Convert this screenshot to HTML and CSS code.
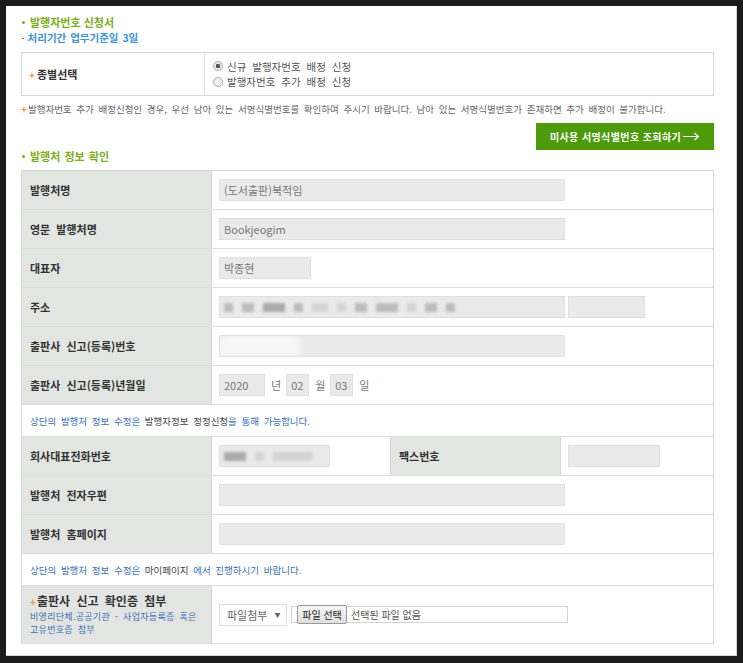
FILE: index.html
```html
<!DOCTYPE html>
<html lang="ko">
<head>
    <meta charset="UTF-8">
    <meta name="viewport" content="width=device-width, initial-scale=1.0">
    <title>발행자번호 신청서</title>
    <link rel="stylesheet" href="styles.css">
</head>
<body>
    <div class="page">
        <h2 class="sec-title">발행자번호 신청서</h2>
        <p class="period">- <strong>처리기간 업무기준일 3일</strong></p>

        <div class="kind-box">
            <div class="kind-label"><span class="plus">+</span>종별선택</div>
            <div class="kind-opts">
                <label><input type="radio" name="kind" checked>신규 발행자번호 배정 신청</label>
                <label><input type="radio" name="kind">발행자번호 추가 배정 신청</label>
            </div>
        </div>

        <p class="notice"><span class="plus">+</span>발행자번호 추가 배정신청인 경우, 우선 남아 있는 서명식별번호를 확인하여 주시기 바랍니다. 남아 있는 서명식별번호가 존재하면 추가 배정이 불가합니다.</p>

        <div class="btn-row">
            <button type="button" class="btn-green">미사용 서명식별번호 조회하기
                <svg width="17" height="9" viewBox="0 0 17 9"><path d="M0 4.5H15.5M11.5 1L15.5 4.5L11.5 8" fill="none" stroke="#fff" stroke-width="1.2"/></svg>
            </button>
        </div>

        <h2 class="sec-title sub">발행처 정보 확인</h2>

        <div class="info">
            <div class="row">
                <div class="th">발행처명</div>
                <div class="td"><span class="field w-lg">(도서출판)북적임</span></div>
            </div>
            <div class="row">
                <div class="th">영문 발행처명</div>
                <div class="td"><span class="field w-lg">Bookjeogim</span></div>
            </div>
            <div class="row">
                <div class="th">대표자</div>
                <div class="td"><span class="field w-sm">박종현</span></div>
            </div>
            <div class="row">
                <div class="th">주소</div>
                <div class="td">
                    <span class="field w-lg blur">
                        <i class="bk a"></i><i class="bk b"></i><i class="bk c dark"></i><i class="bk a"></i><i class="bk d light"></i><i class="bk a light"></i><i class="bk b"></i><i class="bk c"></i><i class="bk a light"></i><i class="bk b"></i><i class="bk a"></i>
                    </span>
                    <span class="field w-addr"></span>
                </div>
            </div>
            <div class="row">
                <div class="th">출판사 신고(등록)번호</div>
                <div class="td"><span class="field w-lg blur"><i class="bk white"></i></span></div>
            </div>
            <div class="row">
                <div class="th">출판사 신고(등록)년월일</div>
                <div class="td date">
                    <span class="field w-year">2020</span><span class="unit">년</span>
                    <span class="field w-day">02</span><span class="unit">월</span>
                    <span class="field w-day">03</span><span class="unit">일</span>
                </div>
            </div>
            <div class="row note-row">
                <p><span class="blue">상단의 발행처 정보 수정은</span> 발행자정보 정정신청<span class="blue">을 통해 가능합니다.</span></p>
            </div>
            <div class="row">
                <div class="th">회사대표전화번호</div>
                <div class="td phone"><span class="field w-tel blur"><i class="bk e dark"></i><i class="bk a light"></i><i class="bk f light"></i></span></div>
                <div class="th fax">팩스번호</div>
                <div class="td"><span class="field w-sm"></span></div>
            </div>
            <div class="row">
                <div class="th">발행처 전자우편</div>
                <div class="td"><span class="field w-lg"></span></div>
            </div>
            <div class="row">
                <div class="th">발행처 홈페이지</div>
                <div class="td"><span class="field w-lg"></span></div>
            </div>
            <div class="row note-row">
                <p><span class="blue">상단의 발행처 정보 수정은</span> 마이페이지 <span class="blue">에서 진행하시기 바랍니다.</span></p>
            </div>
            <div class="row attach-row">
                <div class="th attach">
                    <span class="attach-title"><span class="plus">+</span>출판사 신고 확인증 첨부</span>
                    <span class="attach-desc">비영리단체.공공기관 - 사업자등록증 혹은<br>고유번호증 첨부</span>
                </div>
                <div class="td">
                    <span class="select">파일첨부<span class="caret">▼</span></span>
                    <span class="file-box"><span class="file-btn">파일 선택</span>선택된 파일 없음</span>
                </div>
            </div>
        </div>
    </div>
</body>
</html>
```

FILE: styles.css
```css
body {
    margin: 0;
    background: #1b1b1b;
    font-family: "Noto Sans CJK KR", sans-serif;
}
.page {
    margin: 6px 0 0 6px;
    width: 731px;
    height: 650px;
    background: #fff;
    border-right: 1px solid #d4d4d4;
    border-bottom: 1px solid #d4d4d4;
    padding: 8px 0 0 15px;
    box-sizing: border-box;
}
.sec-title {
    margin: 0;
    display: flex;
    align-items: center;
    font-size: 11px;
    line-height: 16px;
    font-weight: bold;
    color: #7cae22;
}
.sec-title::before {
    content: "";
    width: 3px;
    height: 3px;
    border-radius: 50%;
    background: #7cae22;
    margin: 0 5px 0 1px;
}
.sec-title.sub {
    line-height: 12px;
    word-spacing: 1px;
}
.period {
    margin: 0;
    font-size: 10.5px;
    line-height: 16px;
    color: #555;
}
.period strong {
    color: #3d93d6;
    word-spacing: 1px;
}
.plus {
    color: #f29a1f;
    font-weight: bold;
    font-size: 10px;
    margin-right: 2px;
}
.kind-box {
    margin-top: 6px;
    width: 693px;
    height: 44px;
    border: 1px solid #d9d9d9;
    box-sizing: border-box;
    display: flex;
}
.kind-label {
    width: 183px;
    border-right: 1px solid #dcdcdc;
    box-sizing: border-box;
    display: flex;
    align-items: center;
    padding-left: 7px;
    font-size: 11px;
    font-weight: bold;
    color: #333;
}
.kind-opts {
    display: flex;
    flex-direction: column;
    justify-content: center;
    padding-left: 8px;
    font-size: 10.5px;
    line-height: 15.5px;
    color: #555;
    word-spacing: 3px;
}
.kind-opts label {
    display: flex;
    align-items: center;
}
.kind-opts input {
    appearance: none;
    width: 10px;
    height: 10px;
    margin: 0 4px 0 0;
    border: 1px solid #a9a9a9;
    border-radius: 50%;
    background: #eee;
    box-sizing: border-box;
}
.kind-opts input:checked {
    background: radial-gradient(circle, #555 0 2px, #eee 2.6px);
}
.notice {
    margin: 5px 0 0;
    font-size: 9.5px;
    line-height: 16px;
    color: #666;
    word-spacing: 2px;
}
.notice .plus {
    margin-right: 1px;
}
.btn-row {
    margin-top: 6px;
    width: 693px;
    display: flex;
    justify-content: flex-end;
}
.btn-green {
    width: 178px;
    height: 27px;
    padding: 0;
    border: 0;
    background: #4d9b0b;
    color: #fff;
    font-family: "Noto Sans CJK KR", sans-serif;
    font-size: 10px;
    font-weight: bold;
    letter-spacing: 0.4px;
    display: flex;
    align-items: center;
    justify-content: center;
    gap: 2px;
}
.info {
    margin-top: 8px;
    width: 693px;
    border: 1px solid #d6d6d6;
    border-bottom: 0;
    box-sizing: border-box;
}
.row {
    display: flex;
    height: 39px;
    border-bottom: 1px solid #dcdcdc;
    box-sizing: border-box;
}
.th {
    width: 190px;
    flex-shrink: 0;
    background: #e2e5e2;
    border-right: 1px solid #d6d6d6;
    box-sizing: border-box;
    display: flex;
    align-items: center;
    padding-left: 8px;
    font-size: 11px;
    font-weight: bold;
    color: #333;
    word-spacing: 3px;
}
.th.fax {
    width: 171px;
    border-left: 1px solid #d6d6d6;
}
.td {
    flex: 1;
    display: flex;
    align-items: center;
    padding-left: 7px;
}
.td.phone {
    flex: none;
    width: 178px;
    box-sizing: border-box;
}
.field {
    height: 22px;
    box-sizing: border-box;
    background: #eaeaea;
    border: 1px solid #e0e0e0;
    padding-left: 4px;
    display: flex;
    align-items: center;
    font-size: 11px;
    color: #777;
    overflow: hidden;
}
.w-lg { width: 346px; }
.w-sm { width: 92px; }
.w-addr { width: 77px; margin-left: 3px; }
.w-tel { width: 111px; }
.w-year { width: 46px; }
.w-day { width: 23px; }
.unit {
    font-size: 11px;
    color: #777;
    margin: 0 5px 0 6px;
}
.blur {
    gap: 9px;
}
.bk {
    display: block;
    height: 9px;
    width: 10px;
    background: #bcbcbc;
    filter: blur(1.6px);
}
.bk.a { width: 9px; }
.bk.b { width: 12px; }
.bk.c { width: 22px; }
.bk.d { width: 16px; }
.bk.e { width: 22px; }
.bk.f { width: 40px; }
.bk.dark { background: #aaa; }
.bk.light { background: #d4d4d4; }
.bk.white {
    width: 80px;
    height: 20px;
    margin-left: -4px;
    background: #f8f8f8;
    filter: blur(3px);
}
.note-row {
    height: 32px;
    align-items: center;
    padding-left: 8px;
}
.note-row p {
    margin: 0;
    font-size: 9.5px;
    color: #444;
    word-spacing: 2px;
}
.blue {
    color: #3a6fb6;
}
.attach-row {
    height: 58px;
}
.th.attach {
    flex-direction: column;
    align-items: flex-start;
    justify-content: center;
    word-spacing: 2px;
}
.attach-title {
    font-size: 12px;
    line-height: 16px;
    word-spacing: 3px;
}
.attach-title .plus {
    margin-right: 1px;
}
.attach-desc {
    font-size: 9px;
    line-height: 13px;
    letter-spacing: 0.3px;
    font-weight: normal;
    color: #3a6fb6;
}
.select {
    width: 68px;
    height: 22px;
    box-sizing: border-box;
    border: 1px solid #ddd;
    background: #fff;
    display: flex;
    align-items: center;
    padding-left: 7px;
    font-size: 11px;
    color: #666;
}
.caret {
    font-size: 6px;
    margin-left: 7px;
    color: #666;
}
.file-box {
    margin-left: 4px;
    width: 277px;
    height: 17px;
    box-sizing: border-box;
    border: 1px solid #d4d4d4;
    display: flex;
    align-items: center;
    font-size: 10px;
    color: #555;
}
.file-btn {
    margin: 0 4px 0 5px;
    height: 19px;
    width: 50px;
    box-sizing: border-box;
    border: 1px solid #999;
    border-radius: 2px;
    background: linear-gradient(#f7f7f7, #dedede);
    display: flex;
    align-items: center;
    justify-content: center;
    color: #222;
    font-size: 10px;
}
```
